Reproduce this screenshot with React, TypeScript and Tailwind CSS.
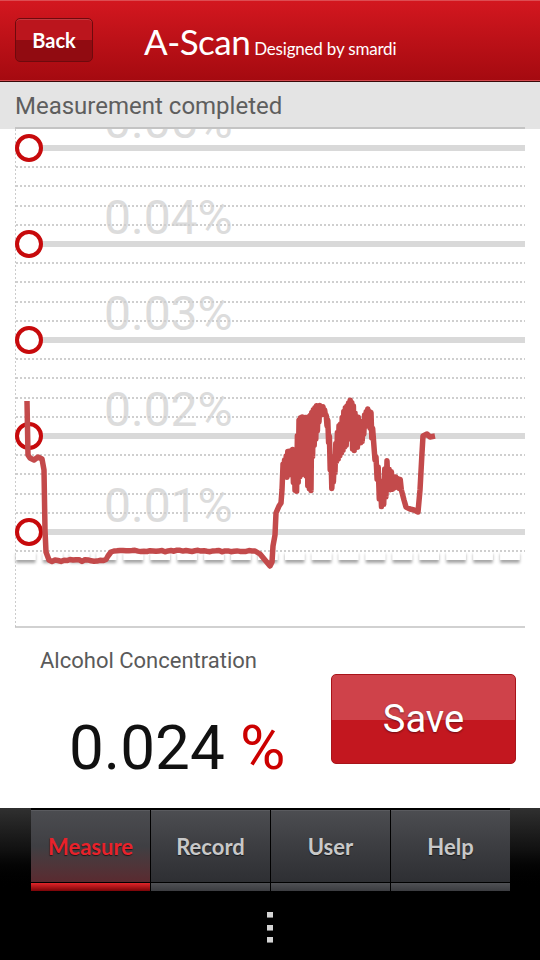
import React from "react";

type Pt = [number, number];

const MAJORS = [148, 244, 340, 436, 532];
const LABELS = ["0.05%", "0.04%", "0.03%", "0.02%", "0.01%"];
const TABS = ["Measure", "Record", "User", "Help"];

// deterministic noise so the trace looks the same every run
function rand(i: number) {
  const s = Math.sin(i * 12.9898 + 4.1) * 43758.5453;
  return s - Math.floor(s);
}

function band(env: [number, number, number][], seed: number, step = 0.8): Pt[] {
  const pts: Pt[] = [];
  let i = 0;
  const end = env[env.length - 1][0];
  for (let x = env[0][0]; x <= end; x += step) {
    let j = 0;
    while (j < env.length - 2 && env[j + 1][0] < x) j++;
    const [x0, t0, b0] = env[j];
    const [x1, t1, b1] = env[j + 1];
    const f = Math.min(1, Math.max(0, (x - x0) / (x1 - x0)));
    const t = t0 + (t1 - t0) * f;
    const b = b0 + (b1 - b0) * f;
    const r = rand(seed + i);
    pts.push([x, i % 2 === 0 ? t + r * 3 : b - r * 3]);
    i++;
  }
  return pts;
}

function buildTrace(): string {
  const pts: Pt[] = [
    [27, 401], [28, 455], [30, 458], [34, 460], [38, 457], [42, 459],
    [44, 470], [45, 530], [46, 552], [49, 560],
  ];
  for (let x = 52; x <= 106; x += 3) pts.push([x, 560.5 + (rand(x) - 0.5) * 2]);
  pts.push([108, 556], [111, 552], [114, 551]);
  for (let x = 117; x <= 252; x += 3) pts.push([x, 551 + (rand(x + 7) - 0.5) * 1.6]);
  pts.push(
    [255, 551], [260, 554], [265, 560], [270, 566], [272, 562], [273, 546],
    [275, 535], [276, 513], [279, 506], [281, 503], [282, 490], [283, 465],
  );
  pts.push(
    ...band(
      [
        [283, 463, 470], [287, 452, 478], [292, 448, 475], [296, 450, 497],
        [299, 418, 480], [302, 416, 476], [305, 416, 468], [308, 417, 488],
        [311, 412, 492], [313, 410, 450], [316, 406, 440], [320, 404, 418],
        [325, 408, 414], [328, 420, 432], [330, 440, 470], [332, 470, 493],
        [334, 462, 480], [336, 440, 465], [338, 428, 460], [341, 420, 455],
        [344, 410, 450], [347, 404, 445], [350, 400, 430], [353, 404, 452],
        [356, 415, 450], [359, 418, 445], [362, 425, 445], [365, 412, 430],
        [368, 408, 420], [371, 412, 432], [373, 430, 450],
      ],
      100,
    ),
  );
  pts.push([375, 460]);
  pts.push(
    ...band(
      [
        [376, 455, 470], [379, 470, 500], [382, 490, 508], [385, 465, 505],
        [387, 460, 490], [390, 470, 490], [394, 475, 490], [398, 476, 488],
        [402, 478, 492],
      ],
      300,
      1.1,
    ),
  );
  pts.push(
    [404, 500], [406, 507], [410, 509], [414, 510], [418, 512], [420, 490],
    [422, 453], [423, 436], [427, 434], [430, 437], [435, 436],
  );
  return pts.map(([x, y], i) => `${i ? "L" : "M"}${x.toFixed(1)} ${y.toFixed(1)}`).join(" ");
}

const TRACE = buildTrace();

function Chart() {
  const dotted: number[] = [];
  MAJORS.forEach((c, i) => {
    const n = i === MAJORS.length - 1 ? 1 : 4;
    for (let k = 1; k <= n; k++) dotted.push(Math.round(c + 19.2 * k));
  });

  return (
    <svg width={540} height={500} viewBox="0 129 540 500" className="block shrink-0 overflow-hidden">
      <defs>
        <filter id="axisShadow" x="-30%" y="-60%" width="160%" height="280%">
          <feDropShadow dx="0" dy="3" stdDeviation="1.6" floodColor="#000" floodOpacity="0.35" />
        </filter>
      </defs>

      {LABELS.map((l, i) => (
        <text
          key={l}
          x={104}
          y={MAJORS[i] - 10}
          fontFamily="Roboto, sans-serif"
          fontSize={48}
          fill="#dcdcdc"
        >
          {l}
        </text>
      ))}

      {Array.from({ length: 19 }).map((_, k) => (
        <rect
          key={k}
          x={16 + 26.9 * k}
          y={551}
          width={19.5}
          height={9}
          fill="#fff"
          filter="url(#axisShadow)"
        />
      ))}

      {dotted.map((y) => (
        <line
          key={y}
          x1={16}
          x2={525}
          y1={y}
          y2={y}
          stroke="#cfcfcf"
          strokeWidth={2}
          strokeDasharray="2 2"
        />
      ))}

      {MAJORS.map((c) => (
        <rect key={c} x={15} y={c - 3} width={510} height={6} fill="#d9d9d9" />
      ))}

      <line x1={15.5} x2={15.5} y1={129} y2={627} stroke="#cccccc" strokeWidth={1} strokeDasharray="2 2" />

      {MAJORS.map((c) => (
        <circle key={c} cx={29} cy={c} r={12} fill="#fff" stroke="#c70a0c" strokeWidth={4} />
      ))}

      <path d={TRACE} fill="none" stroke="#c34a4b" strokeWidth={5.5} strokeLinejoin="round" />

      <line x1={15} x2={525} y1={627} y2={627} stroke="#c2c2c2" strokeWidth={1.5} />
    </svg>
  );
}

export default function App() {
  return (
    <main className="w-[540px] h-[960px] overflow-hidden bg-white flex flex-col">
      <header className="h-[80px] shrink-0 border-t border-[#dd4c52] bg-linear-to-b from-[#d3171f] to-[#a50a10] flex items-start">
        <button className="mt-[17px] ml-[15px] w-[78px] h-[44px] rounded-[5px] border border-[#6e0a0d] bg-[linear-gradient(#bb151d_0_50%,#910b11_50%_100%)] shadow-[inset_0_1px_0_rgba(255,255,255,0.15)] text-white font-[Lato,sans-serif] font-bold text-[20px]">
          Back
        </button>
        <div className="ml-[51px] mt-[23px] flex items-baseline text-white font-[Lato,sans-serif]">
          <span className="text-[35px] leading-[35px] tracking-[-0.5px]">A-Scan</span>
          <span className="ml-[4px] text-[17px] tracking-[-0.2px]">Designed by smardi</span>
        </div>
      </header>
      <div className="h-px shrink-0 bg-[#d44a50]" />
      <div className="h-px shrink-0 bg-[#3a0808]" />

      <div className="h-[45px] shrink-0 bg-[#e4e4e4] pt-[10px] pl-[15px] font-[Roboto,sans-serif] text-[24px] leading-[28px] text-[#5e5e5e]">
        Measurement completed
      </div>
      <div className="flex h-[2px] shrink-0 bg-[#e4e4e4]">
        <div className="ml-[15px] w-[510px] bg-[#c4c4c4]" />
      </div>

      <Chart />

      <section className="h-[179px] shrink-0 flex items-start font-[Roboto,sans-serif]">
        <div className="flex-1 pl-[40px] pt-[19px]">
          <div className="text-[22px] leading-[26px] text-[#5a5a5a]">Alcohol Concentration</div>
          <div className="mt-[43px] ml-[29px] text-[62px] leading-[62px] text-[#111]">
            0.024 <span className="text-[#cc0000]">%</span>
          </div>
        </div>
        <button className="mt-[45px] mr-[24px] w-[185px] h-[90px] rounded-[5px] border border-[#a8141a] bg-[linear-gradient(#cf424a_0_51%,#c3171f_51%_100%)] text-white text-[38px] [text-shadow:0_1px_2px_rgba(0,0,0,0.45)]">
          Save
        </button>
      </section>

      <nav className="h-[83px] shrink-0 flex bg-linear-to-b from-[#303030] via-[#111111] to-black">
        <div className="ml-[31px] flex gap-px bg-black pt-[2px]">
          {TABS.map((t, i) => (
            <div key={t} className="w-[119px] flex flex-col">
              <div
                className={
                  i === 0
                    ? "h-[72px] flex items-center justify-center border-t border-[#5a5b5f] bg-linear-to-b from-[#4b4c50] via-[#3f3f43] to-[#5a2a30] font-[Lato,sans-serif] font-bold text-[22px] text-[#e8222b] [text-shadow:0_1px_1px_rgba(0,0,0,0.6)]"
                    : "h-[72px] flex items-center justify-center border-t border-[#5a5b5f] bg-linear-to-b from-[#4c4d51] via-[#3c3d41] to-[#2e2f33] font-[Lato,sans-serif] font-bold text-[22px] text-[#c8c8c8] [text-shadow:0_1px_1px_rgba(0,0,0,0.6)]"
                }
              >
                {t}
              </div>
              <div
                className={
                  i === 0
                    ? "mt-px h-[8px] bg-linear-to-b from-[#e2262a] to-[#7a0508]"
                    : "mt-px h-[8px] bg-linear-to-b from-[#505155] to-[#3b3c40]"
                }
              />
            </div>
          ))}
        </div>
      </nav>

      <div className="flex-1 bg-black flex flex-col items-center pt-[21px] gap-[6.5px]">
        {[0, 1, 2].map((d) => (
          <div key={d} className="w-[6px] h-[6px] bg-[#d4d4d4] border-b border-[#777]" />
        ))}
      </div>
    </main>
  );
}
